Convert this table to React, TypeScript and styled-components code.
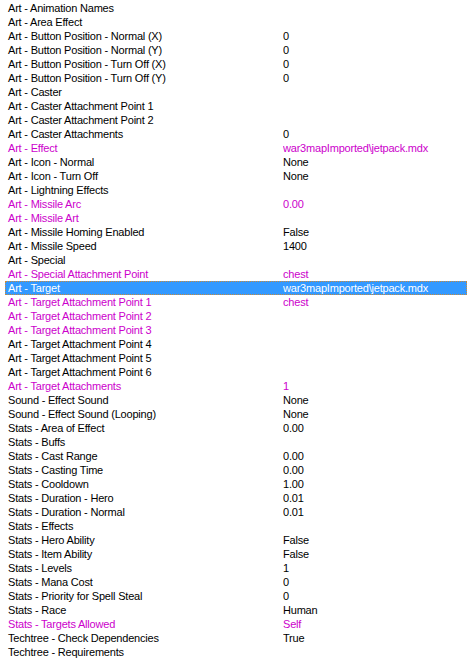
import React from "react";
import styled, { createGlobalStyle } from "styled-components";

const GlobalStyle = createGlobalStyle`
  html, body {
    margin: 0;
    padding: 0;
    background: #ffffff;
  }
`;

const Container = styled.div`
  width: 467px;
  height: 660px;
  overflow: hidden;
  background: #ffffff;
  padding: 1px 0 0 5px;
  box-sizing: border-box;
  font-family: "Liberation Sans", Arial, sans-serif;
  font-size: 11px;
  letter-spacing: -0.2px;
`;

const Row = styled.div<{ modified: boolean; selected: boolean }>`
  display: grid;
  grid-template-columns: 278px 1fr;
  height: 14px;
  line-height: 14px;
  white-space: nowrap;
  color: ${(p) => (p.selected ? "#ffffff" : p.modified ? "#cc00cc" : "#000000")};
  background: ${(p) => (p.selected ? "#3399ff" : "transparent")};
  box-sizing: border-box;
  ${(p) => p.selected && `outline: 1px dotted #c88a3a; outline-offset: -1px;`}
`;

const Name = styled.div`
  padding-left: 3px;
  overflow: hidden;
`;

const Value = styled.div`
  overflow: hidden;
`;

type Field = [string, string, boolean?];

const fields: Field[] = [
  ["Art - Animation Names", ""],
  ["Art - Area Effect", ""],
  ["Art - Button Position - Normal (X)", "0"],
  ["Art - Button Position - Normal (Y)", "0"],
  ["Art - Button Position - Turn Off (X)", "0"],
  ["Art - Button Position - Turn Off (Y)", "0"],
  ["Art - Caster", ""],
  ["Art - Caster Attachment Point 1", ""],
  ["Art - Caster Attachment Point 2", ""],
  ["Art - Caster Attachments", "0"],
  ["Art - Effect", "war3mapImported\\jetpack.mdx", true],
  ["Art - Icon - Normal", "None"],
  ["Art - Icon - Turn Off", "None"],
  ["Art - Lightning Effects", ""],
  ["Art - Missile Arc", "0.00", true],
  ["Art - Missile Art", "", true],
  ["Art - Missile Homing Enabled", "False"],
  ["Art - Missile Speed", "1400"],
  ["Art - Special", ""],
  ["Art - Special Attachment Point", "chest", true],
  ["Art - Target", "war3mapImported\\jetpack.mdx", true],
  ["Art - Target Attachment Point 1", "chest", true],
  ["Art - Target Attachment Point 2", "", true],
  ["Art - Target Attachment Point 3", "", true],
  ["Art - Target Attachment Point 4", ""],
  ["Art - Target Attachment Point 5", ""],
  ["Art - Target Attachment Point 6", ""],
  ["Art - Target Attachments", "1", true],
  ["Sound - Effect Sound", "None"],
  ["Sound - Effect Sound (Looping)", "None"],
  ["Stats - Area of Effect", "0.00"],
  ["Stats - Buffs", ""],
  ["Stats - Cast Range", "0.00"],
  ["Stats - Casting Time", "0.00"],
  ["Stats - Cooldown", "1.00"],
  ["Stats - Duration - Hero", "0.01"],
  ["Stats - Duration - Normal", "0.01"],
  ["Stats - Effects", ""],
  ["Stats - Hero Ability", "False"],
  ["Stats - Item Ability", "False"],
  ["Stats - Levels", "1"],
  ["Stats - Mana Cost", "0"],
  ["Stats - Priority for Spell Steal", "0"],
  ["Stats - Race", "Human"],
  ["Stats - Targets Allowed", "Self", true],
  ["Techtree - Check Dependencies", "True"],
  ["Techtree - Requirements", ""],
];

const App = () => {
  const selectedName = "Art - Target";
  return (
    <>
      <GlobalStyle />
      <Container>
        {fields.map(([name, value, modified]) => (
          <Row key={name} modified={!!modified} selected={name === selectedName}>
            <Name>{name}</Name>
            <Value>{value}</Value>
          </Row>
        ))}
      </Container>
    </>
  );
};

export default App;
